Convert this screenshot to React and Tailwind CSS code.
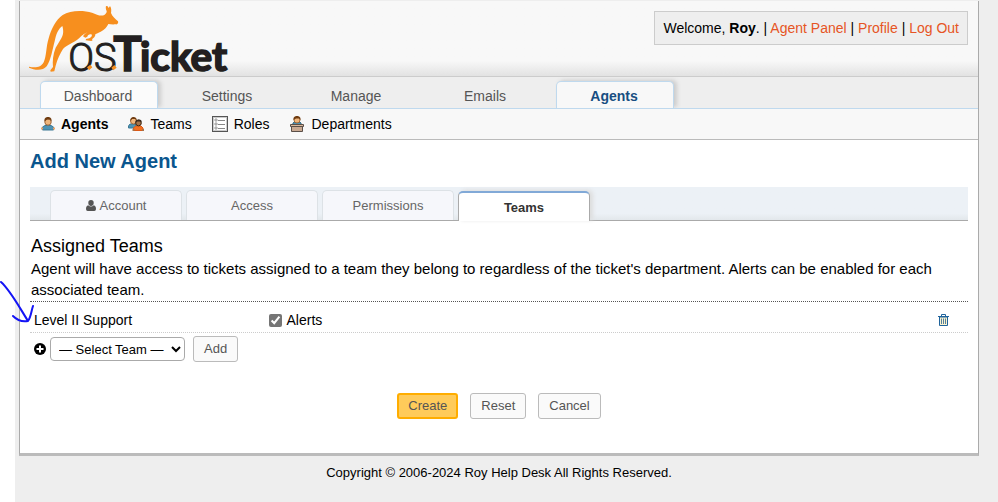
import React, { useState } from "react";

function Logo() {
  return (
    <svg viewBox="84 12 603 210" className="block h-[70px] w-[201px] overflow-visible" role="img" aria-label="osTicket">
      <path
        fill="#f78f1e"
        d="M87 200 C105 204 123 203 131 187 C140 168 138 140 146 115 C153 88 168 58 188 45 C210 30 250 30 276 38 C290 43 302 50 313 45 C318 41 321 37 320 33 C317 28 317 22 318 18 L323 19 L326 24 L330 18 C335 25 334 33 333 39 C337 49 346 57 354 64 C356 69 353 74 347 73 C339 74 331 73 325 72 C321 82 312 90 302 95 C295 99 290 100 286 103 C287 110 280 114 276 118 L278 121 L274 123 L257 121 L258 117 L268 115 C275 111 278 106 274 103 C267 102 263 105 262 110 L256 113 L249 109 C253 101 262 97 268 97 C257 98 247 105 238 114 C222 129 200 134 189 147 C181 160 172 178 167 197 L163 214 L152 215 L151 211 L159 201 C157 184 159 163 167 143 L184 115 C192 101 190 88 187 78 C174 87 168 104 164 124 C157 150 153 180 140 199 C129 213 104 211 87 203 Z"
      />
      <text y="212" fill="#231f20" stroke="#231f20" className="font-[Lato,sans-serif] font-bold">
        <tspan x="205" strokeWidth="3" className="font-[Roboto,sans-serif] text-[114px] font-light">OS</tspan>
        <tspan x="340" strokeWidth="4" className="text-[143px]">T</tspan>
        <tspan x="420" strokeWidth="5" className="text-[122px]">icket</tspan>
      </text>
      <path d="M261 202 L271 194 L277 202 L267 211 Z M334 203 L343 195 L350 203 L340 211 Z" fill="#f78f1e" />
    </svg>
  );
}

function AgentIcon() {
  return (
    <svg viewBox="0 0 14 14" className="h-[14px] w-[14px] shrink-0" aria-hidden="true">
      <path d="M1.500 13 V10 L4 8.500 H10 L12.500 10 V13 Z" fill="#4f94b5" stroke="#3c7894" />
      <path d="M0 10.500h2v2H0zM12 10.500h2v2h-2z" fill="#e9a56c" />
      <circle cx="7" cy="5" r="3.200" fill="#f0b67c" stroke="#a0683a" />
      <path d="M3.500 4.500 C3 1 5 0 7 0 S11 1 10.500 4.500 L9 2.500 H6 Z" fill="#703c10" />
    </svg>
  );
}

function TeamsIcon() {
  return (
    <svg viewBox="0 0 16 14" className="h-[14px] w-4 shrink-0" aria-hidden="true">
      <path d="M.5 11 V9 L2 7 H8 V11 Z" fill="#4f94b5" stroke="#3c7894" />
      <circle cx="5.500" cy="4" r="3" fill="#f0b67c" stroke="#a0683a" />
      <path d="M2.500 4 C2 1 4 0 5.500 0 S9 1 8.500 3 L7 2 H4 Z" fill="#703c10" />
      <path d="M5.500 13.500 V11 L7.500 9 H13 L15 11 V13.500 Z" fill="#f37021" stroke="#dc5a17" />
      <path d="M4.500 12h2v2h-2zM14 12h2v2h-2z" fill="#a5744c" />
      <circle cx="10.500" cy="6" r="2.800" fill="#a5744c" stroke="#3d2510" />
      <path d="M7.500 6 C7 3 9 2.500 10.500 2.500 S14 3 13.500 5 L12 4.500 H9 Z" fill="#3b2a1d" />
    </svg>
  );
}

function RolesIcon() {
  return (
    <svg viewBox="0 0 16 16" className="h-4 w-4 shrink-0" aria-hidden="true">
      <rect x=".5" y=".5" width="15" height="15" fill="#fff" stroke="#555" />
      <rect x="1.500" y="1.500" width="13" height="13" fill="none" stroke="#ccc" />
      <path d="M6 4.500h7M6 8.500h7M6 12.500h7" stroke="#888" />
      <path d="M3 3h2v2H3zM3 7h2v2H3zM3 11h2v2H3z" fill="#fff" stroke="#777" strokeWidth=".7" />
    </svg>
  );
}

function DepartmentsIcon() {
  return (
    <svg viewBox="-1 0 16 16" className="h-4 w-4 shrink-0" aria-hidden="true">
      <path d="M2 9 L4 6 H10 L12 9 Z" fill="#4f94b5" stroke="#2d6079" />
      <circle cx="7" cy="4" r="3" fill="#f0b67c" stroke="#a0683a" />
      <path d="M3.500 4 C3 1 5 0 7 0 S11 1 10.500 4 L9 2.500 H6 Z" fill="#703c10" />
      <path d="M.5 8.500 H13.500 V10.500 H.5 Z" fill="#d8b79c" stroke="#5a4f48" />
      <path d="M1.500 10.500 H12.500 V15.500 H1.500 Z" fill="#c9a992" stroke="#5a4f48" />
    </svg>
  );
}

function UserGlyph() {
  return (
    <svg viewBox="0 0 10 11" className="h-[11px] w-[10px]" aria-hidden="true">
      <path fill="#555" d="M5 0 A2.700 2.800 0 0 1 7.700 2.900 A2.700 2.900 0 0 1 5 5.900 A2.700 2.900 0 0 1 2.300 2.900 A2.700 2.800 0 0 1 5 0 Z M2.200 5.200 Q5 8 7.800 5.200 Q10 5.600 10 9 Q10 11 8.300 11 H1.700 Q0 11 0 9 Q0 5.600 2.200 5.200 Z" />
    </svg>
  );
}

function TrashIcon() {
  return (
    <svg viewBox="0 0 11 12" className="h-3 w-[11px]" aria-hidden="true">
      <path d="M1.500 3 H9.500 V11.500 H1.500 Z" fill="#fbf3cf" stroke="#1f639c" />
      <path d="M0 2.500 H11 M3.500 2.500 V.5 H7.500 V2.500" fill="none" stroke="#1f639c" />
      <path d="M3.500 4.500 V10 M5.500 4.500 V10 M7.500 4.500 V10" fill="none" stroke="#55809c" />
    </svg>
  );
}

function PlusIcon() {
  return (
    <svg viewBox="0 0 12 12" className="h-3 w-3" aria-hidden="true">
      <circle cx="6" cy="6" r="6" fill="#000" />
      <path d="M6 2.500 V9.500 M2.500 6 H9.500" stroke="#fff" strokeWidth="2" />
    </svg>
  );
}

const mainTabs = ["Dashboard", "Settings", "Manage", "Emails", "Agents"];

function mainTabClass(name) {
  const base = "flex h-[27px] w-[118px] items-center justify-center rounded-t-[5px] border border-b-0 pt-0.5 pr-0.5 ";
  if (name === "Agents") return base + "border-[#bfd9ee] bg-[#f8f8f8] font-bold text-[#184e81] shadow-[3px_-1px_4px_#ccc]";
  if (name === "Dashboard") return base + "border-[#bfd9ee] bg-[#fbfbfb] text-[#555] shadow-[3px_-1px_4px_#ccc]";
  return base + "border-transparent text-[#555]";
}

const subItems = [
  { name: "Agents", Icon: AgentIcon },
  { name: "Teams", Icon: TeamsIcon },
  { name: "Roles", Icon: RolesIcon },
  { name: "Departments", Icon: DepartmentsIcon },
];

const formTabs = ["Account", "Access", "Permissions", "Teams"];

function TopBar() {
  return (
    <header className="flex h-[76px] items-start justify-between border-b border-[#ccc] bg-linear-to-b from-[#f8f8f8] from-80% to-[#e2e2e2] pr-2.5">
      <a href="#home" className="ml-2 mt-[3px]">
        <Logo />
      </a>
      <p className="mt-2.5 border border-[#ccc] bg-[#eee] px-2 py-1.5 leading-5">
        Welcome, <strong>Roy</strong>. | <a href="#panel" className="text-[#e65524]">Agent Panel</a> |{" "}
        <a href="#profile" className="text-[#e65524]">Profile</a> | <a href="#logout" className="text-[#e65524]">Log Out</a>
      </p>
    </header>
  );
}

function Navigation() {
  return (
    <>
      <nav className="overflow-hidden border-b border-[#bfd9ee] bg-[#eee] pt-1">
        <ul className="flex gap-[11px] pl-5">
          {mainTabs.map((name) => (
            <li key={name}>
              <a href={"#" + name} className={mainTabClass(name)}>{name}</a>
            </li>
          ))}
        </ul>
      </nav>
      <nav className="border-b border-[#bbb] bg-[#f8f8f8]">
        <ul className="flex h-[30px] items-center gap-5 pl-[21px]">
          {subItems.map(({ name, Icon }, i) => (
            <li key={name}>
              <a href={"#sub-" + name} className={i === 0 ? "flex items-center gap-1.5 font-bold" : "flex items-center gap-1.5"}>
                <Icon />
                {name}
              </a>
            </li>
          ))}
        </ul>
      </nav>
    </>
  );
}

function FormTabs() {
  return (
    <ul className="mt-[13px] flex h-[34px] items-end gap-1 border-b border-[#aaa] bg-linear-to-b from-[#ecf1f6] from-80% to-[#e2e7eb] pl-5 text-[13px]">
      {formTabs.map((name) => (
        <li key={name}>
          <a
            href={"#tab-" + name}
            className={
              name === "Teams"
                ? "-mb-px flex h-[30px] w-[132px] items-center justify-center rounded-t-[5px] border border-b-0 border-t-2 border-[#aaa] border-t-[#81a9d7] bg-white pt-0.5 font-bold text-[#333] shadow-[3px_-1px_4px_#ddd]"
                : "flex h-[30px] w-[132px] items-center justify-center gap-1 rounded-t-[5px] border border-b-0 border-[#dde2e6] bg-[#f6f7fb] text-[#666]"
            }
          >
            {name === "Account" && <UserGlyph />}
            {name}
          </a>
        </li>
      ))}
    </ul>
  );
}

export default function App() {
  const [alerts, setAlerts] = useState(true);
  const button = "h-[26px] rounded-[3px] border border-[#bbb] bg-[#fafafa] px-2.5 text-[13px] text-[#555]";
  return (
    <div className="relative bg-white pl-[15px] font-['Liberation_Sans',Arial,sans-serif] text-[14px] text-black">
      <div className="min-h-screen bg-[#eee] pl-1 pr-[19px] pt-px">
        <div className="border-x border-b-[3px] border-x-[#aaa] border-b-[#bbb] bg-white">
          <TopBar />
          <Navigation />
          <main className="px-2.5 pb-[34px] pt-2">
            <h1 className="text-[20px] font-bold leading-[26px] text-[#0a568e]">Add New Agent</h1>
            <FormTabs />
            <form onSubmit={(e) => e.preventDefault()}>
              <div className="border-b border-dotted border-[#555] pb-px pl-px pt-3.5">
                <h2 className="text-[18px] leading-[23px]">Assigned Teams</h2>
                <p className="text-[15px] leading-[21px]">
                  Agent will have access to tickets assigned to a team they belong to regardless of the ticket's department. Alerts can be enabled for each associated team.
                </p>
              </div>
              <div className="flex h-[31px] items-center border-b border-dotted border-[#ccc] pl-1 pt-1.5">
                <span className="w-1/4">Level II Support</span>
                <label className="flex flex-1 items-center gap-[5px] pl-px">
                  <input type="checkbox" checked={alerts} onChange={(e) => setAlerts(e.target.checked)} className="h-[13px] w-[13px] accent-[#757575]" />
                  Alerts
                </label>
                <button type="button" aria-label="Remove team" className="mr-[19px]">
                  <TrashIcon />
                </button>
              </div>
              <div className="flex items-center gap-1 pl-1 pt-[3px]">
                <PlusIcon />
                <select aria-label="Team" className="h-6 w-[135px] rounded-[4px] border border-[#aaa] bg-white pl-1 text-[13px]">
                  <option>— Select Team —</option>
                </select>
                <button type="button" className={button + " ml-1"}>Add</button>
              </div>
              <div className="mt-[31px] flex justify-center gap-3">
                <button type="submit" className="h-[26px] rounded-[3px] border-2 border-[#ffad00] bg-[#ffcb5a] px-[9px] text-[13px] text-[#555]">Create</button>
                <button type="reset" className={button}>Reset</button>
                <button type="button" className={button}>Cancel</button>
              </div>
            </form>
          </main>
        </div>
        <footer className="pt-2 text-center text-[13px] leading-[18px]">Copyright © 2006-2024 Roy Help Desk All Rights Reserved.</footer>
      </div>
      <svg viewBox="0 0 36 44" className="pointer-events-none absolute left-0 top-[280px] h-11 w-9" aria-hidden="true">
        <path d="M1 2 C10 10 18 25 28 41 M13 36 C18 41 23 42 28 41 C31 37 31 32 33 26" fill="none" stroke="#1414f5" strokeWidth="2" strokeLinecap="round" strokeLinejoin="round" />
      </svg>
    </div>
  );
}
